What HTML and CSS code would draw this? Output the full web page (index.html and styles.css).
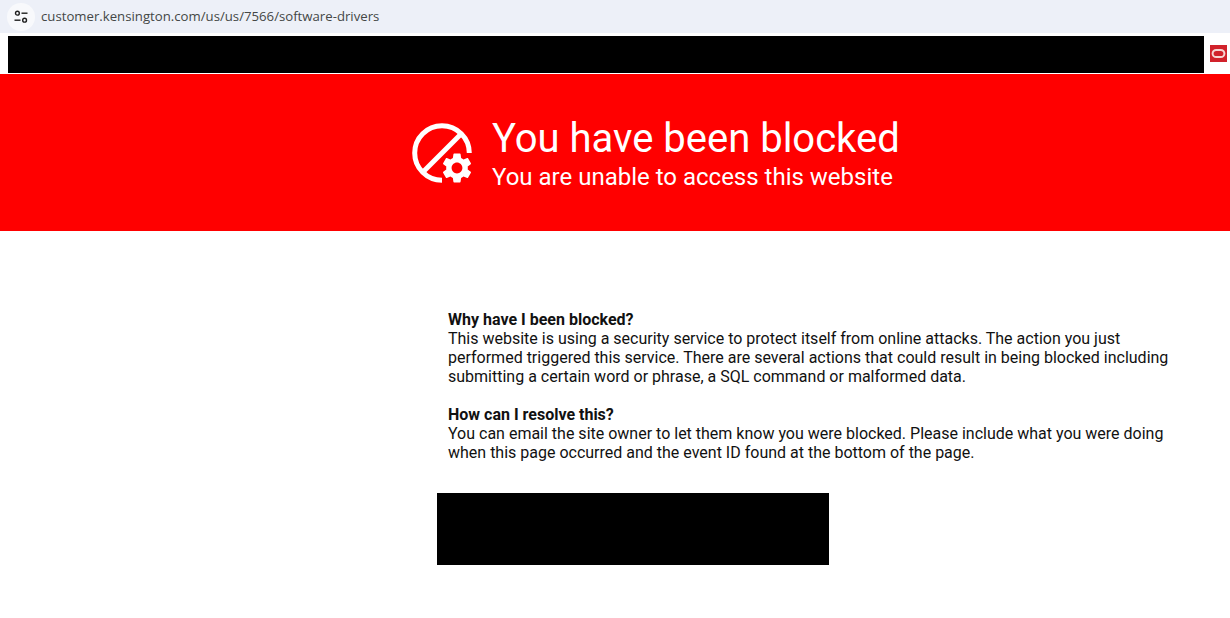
FILE: index.html
```html
<!DOCTYPE html>
<html lang="en">
<head>
    <meta charset="UTF-8">
    <meta name="viewport" content="width=device-width, initial-scale=1.0">
    <title>You have been blocked</title>
    <link rel="stylesheet" href="styles.css">
</head>
<body>
    <div class="address-bar">
        <span class="site-info">
            <svg width="14" height="14" viewBox="0 0 14 14" fill="none" stroke="#1f1f1f" stroke-width="1.4">
                <circle cx="3.4" cy="3.2" r="1.9"/>
                <path d="M7.5 3.2h6"/>
                <path d="M0.5 10.2h6"/>
                <circle cx="10.6" cy="10.2" r="1.9"/>
            </svg>
        </span>
        <span class="url">customer.kensington.com/us/us/7566/software-drivers</span>
    </div>

    <div class="top-strip">
        <div class="redacted-bar"></div>
        <svg class="oracle-mark" width="17" height="17" viewBox="0 0 17 17">
            <rect width="17" height="17" fill="#d1222b"/>
            <rect x="2.6" y="4.9" width="11.8" height="7.2" rx="3.6" fill="none" stroke="#f6d6d3" stroke-width="2"/>
        </svg>
    </div>

    <div class="hero">
        <svg class="hero-icon" width="60" height="60" viewBox="0 0 60 60" fill="none">
            <path d="M57.3 30A27.3 27.3 0 1 0 30 57.3" stroke="#fff" stroke-width="5"/>
            <path d="M11.5 48.5L48.5 11.5" stroke="#fff" stroke-width="5"/>
            <path transform="translate(27 27) scale(1.5)" fill="#fff" d="M19.14 12.94c.04-.3.06-.61.06-.94 0-.32-.02-.64-.07-.94l2.03-1.58c.18-.14.23-.41.12-.61l-1.92-3.32c-.12-.22-.37-.29-.59-.22l-2.39.96c-.5-.38-1.03-.7-1.62-.94l-.36-2.54c-.04-.24-.24-.41-.48-.41h-3.84c-.24 0-.43.17-.47.41l-.36 2.54c-.59.24-1.13.57-1.62.94l-2.39-.96c-.22-.08-.47 0-.59.22L2.74 8.87c-.12.21-.08.47.12.61l2.03 1.58c-.05.3-.09.63-.09.94s.02.64.07.94l-2.03 1.58c-.18.14-.23.41-.12.61l1.92 3.32c.12.22.37.29.59.22l2.39-.96c.5.38 1.03.7 1.62.94l.36 2.54c.05.24.24.41.48.41h3.84c.24 0 .44-.17.47-.41l.36-2.54c.59-.24 1.13-.56 1.62-.94l2.39.96c.22.08.47 0 .59-.22l1.92-3.32c.12-.22.07-.47-.12-.61l-2.01-1.58zM12 15.6c-1.98 0-3.6-1.62-3.6-3.6s1.62-3.6 3.6-3.6 3.6 1.62 3.6 3.6-1.62 3.6-3.6 3.6z"/>
        </svg>
        <div class="hero-text">
            <h1>You have been blocked</h1>
            <p>You are unable to access this website</p>
        </div>
    </div>

    <div class="content">
        <div class="message">
            <h2>Why have I been blocked?</h2>
            <p>This website is using a security service to protect itself from online attacks. The action you just performed triggered this service. There are several actions that could result in being blocked including submitting a certain word or phrase, a SQL command or malformed data.</p>
            <h2>How can I resolve this?</h2>
            <p>You can email the site owner to let them know you were blocked. Please include what you were doing when this page occurred and the event ID found at the bottom of the page.</p>
        </div>
        <div class="redacted-box"></div>
    </div>
</body>
</html>
```

FILE: styles.css
```css
body {
    margin: 0;
    font-family: Roboto, "Liberation Sans", sans-serif;
    color: #111;
    background-color: #ffffff;
}
.address-bar {
    display: flex;
    align-items: center;
    height: 33px;
    padding-left: 7px;
    background-color: #edf0f8;
}
.site-info {
    display: flex;
    align-items: center;
    justify-content: center;
    width: 28px;
    height: 28px;
    margin-right: 6px;
    border-radius: 50%;
    background-color: #f8f9fc;
}
.url {
    font-family: "Open Sans", sans-serif;
    font-size: 13.2px;
    line-height: 33px;
    height: 33px;
    color: #444746;
}
.top-strip {
    display: flex;
    align-items: center;
    height: 41px;
    padding-left: 8px;
}
.redacted-bar {
    width: 1196px;
    height: 37px;
    margin-top: 1px;
    background-color: #000;
}
.oracle-mark {
    margin-left: 6px;
}
.hero {
    display: flex;
    align-items: center;
    height: 157px;
    padding-left: 412px;
    background-color: #ff0000;
    color: #fff;
}
.hero-icon {
    margin-right: 20px;
}
.hero-text h1 {
    margin: 0;
    font-size: 40px;
    font-weight: 400;
    line-height: 47px;
}
.hero-text p {
    margin: 1px 0 0;
    font-size: 24px;
    line-height: 28px;
}
.content {
    padding: 79px 0 0 437px;
}
.message {
    width: 735px;
    padding-left: 11px;
    font-size: 16px;
    line-height: 19px;
}
.message h2 {
    margin: 0;
    font-size: 16px;
    font-weight: 700;
}
.message p {
    margin: 0 0 19px;
}
.redacted-box {
    width: 392px;
    height: 72px;
    margin-top: 31px;
    background-color: #000;
}
```
